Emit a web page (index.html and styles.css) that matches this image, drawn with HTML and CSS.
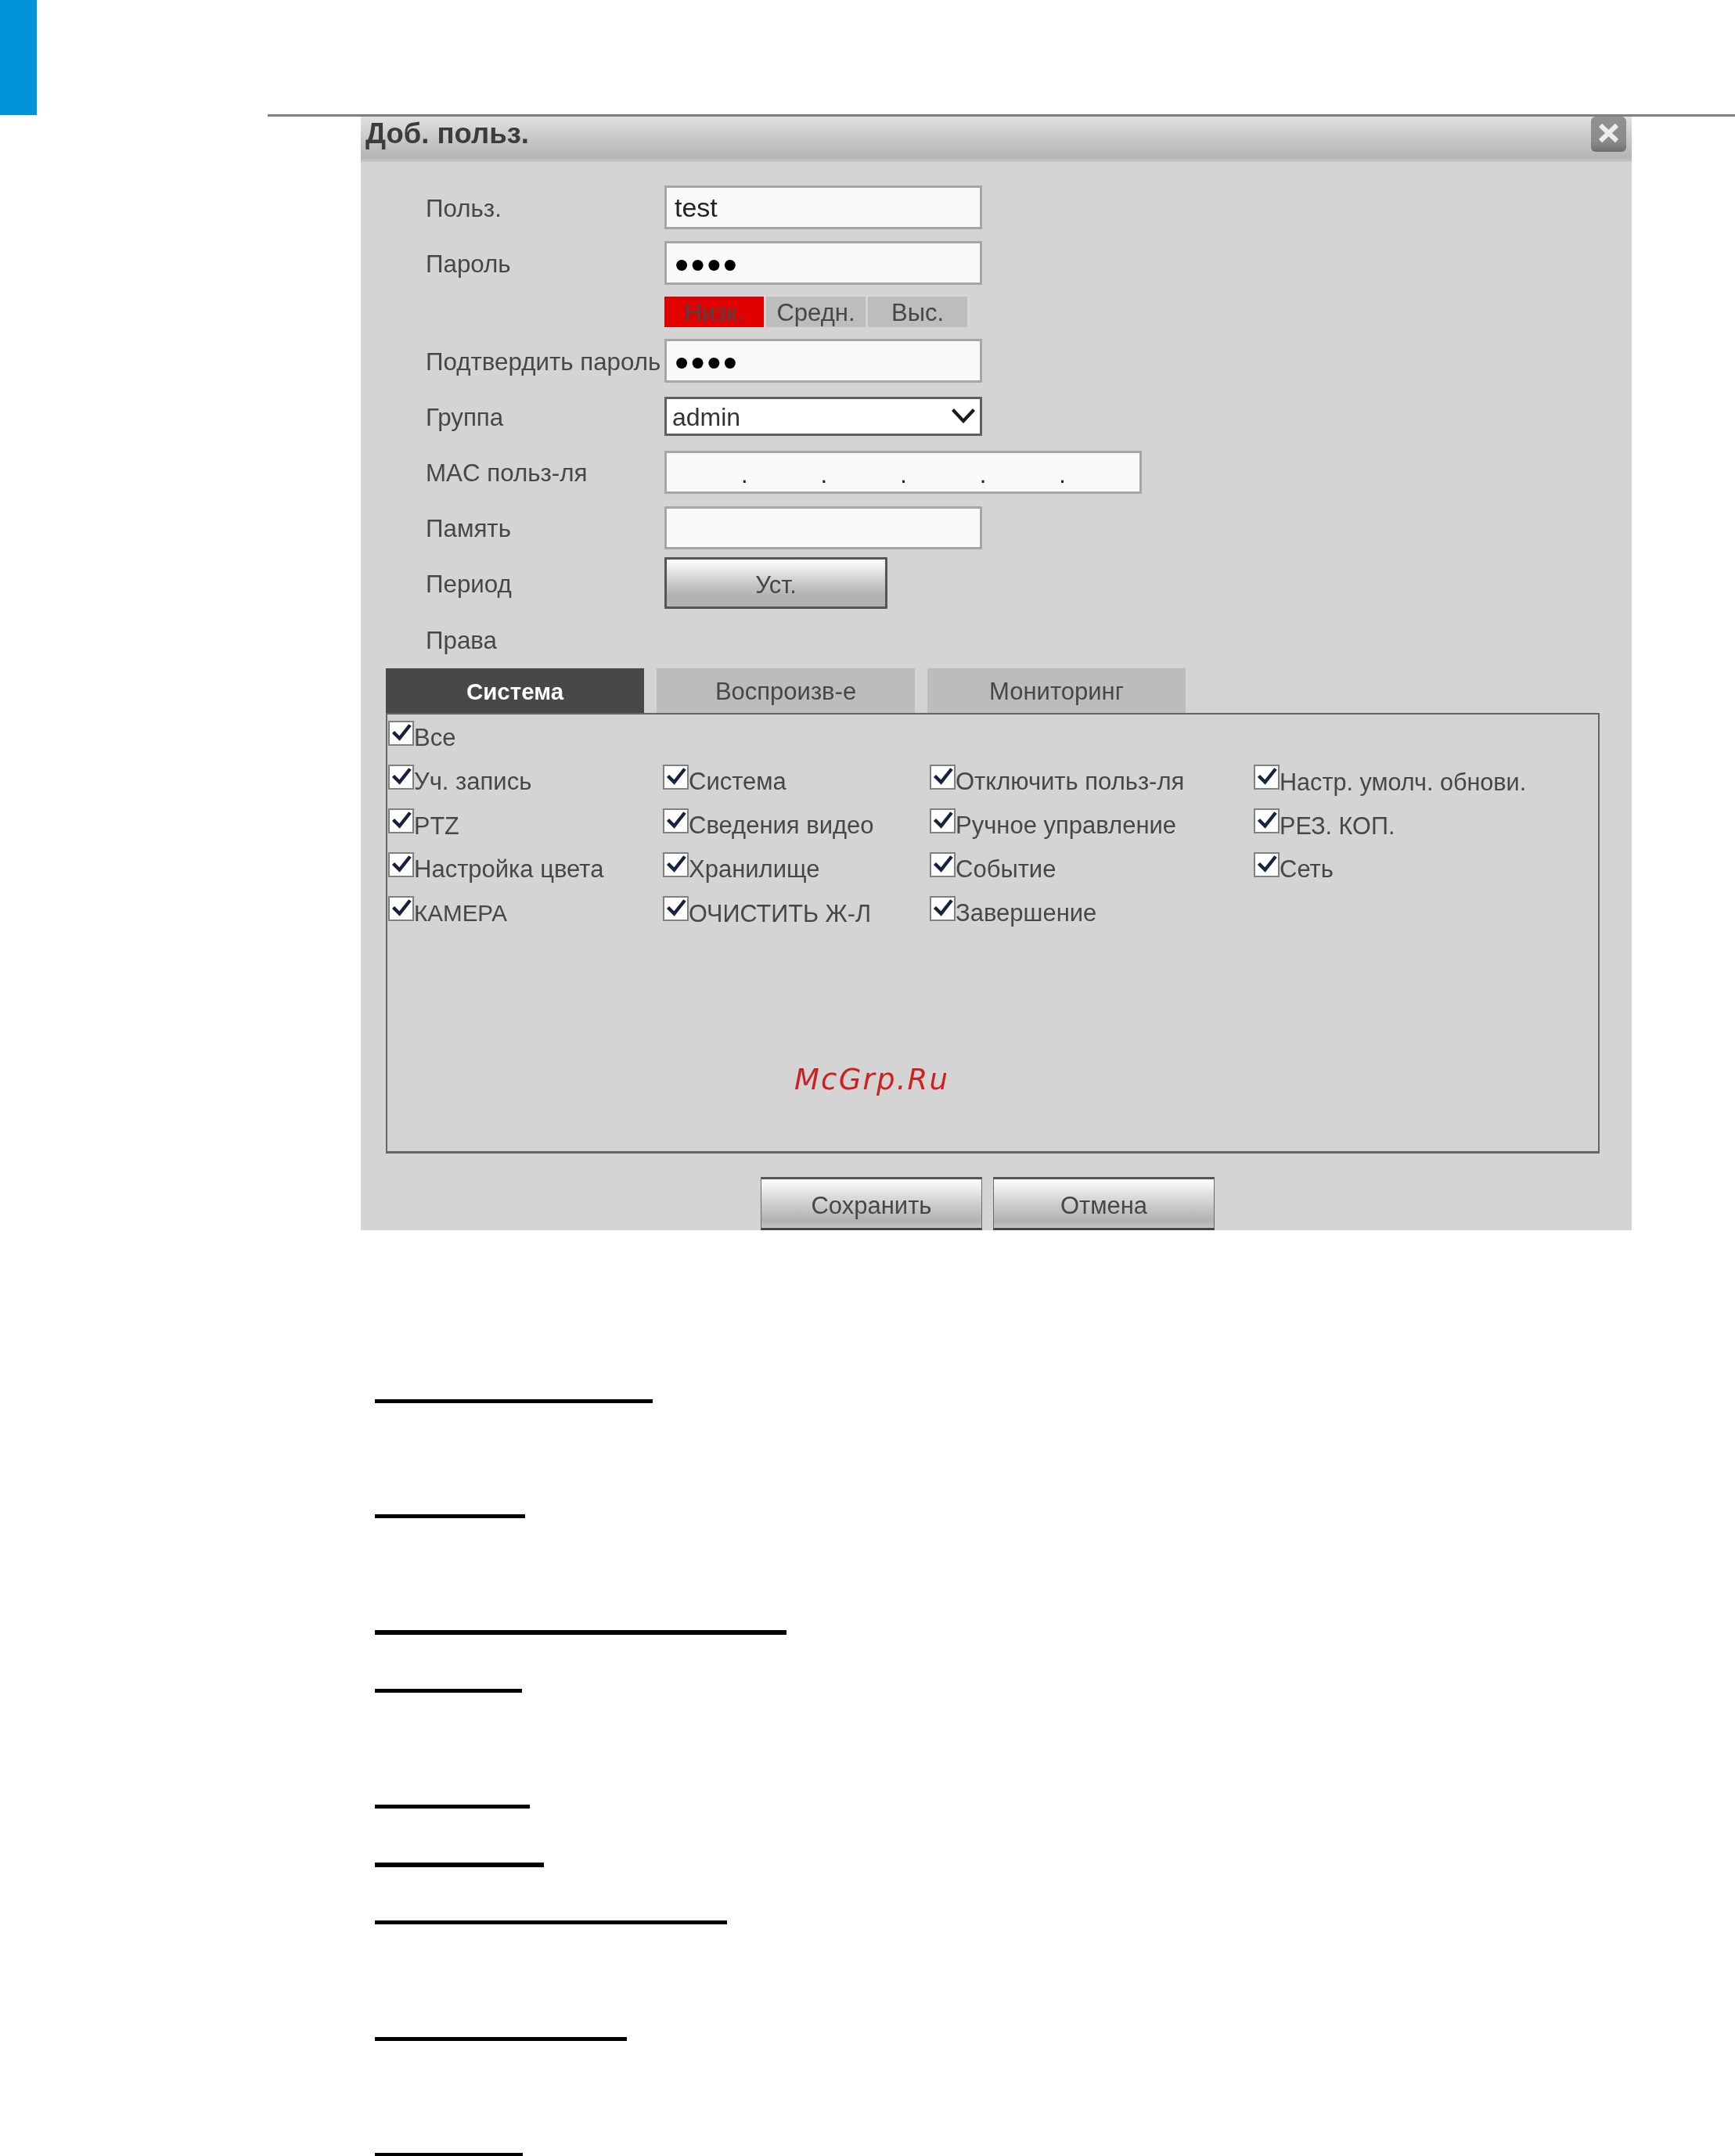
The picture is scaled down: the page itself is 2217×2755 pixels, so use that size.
FILE: index.html
```html
<!DOCTYPE html>
<html lang="ru">
<head>
<meta charset="utf-8">
<title>Доб. польз.</title>
<link rel="stylesheet" href="styles.css">
</head>
<body>
<svg class="defs" width="0" height="0" aria-hidden="true">
  <symbol id="chk" viewBox="0 0 32 32"><path d="M6.5 14.5 L14.5 22.5 L28 5.5" fill="none" stroke="#16233c" stroke-width="4.4"/></symbol>
</svg>
<header class="page-head">
  <div class="tab-mark"></div>
  <div class="rule"></div>
</header>
<section class="dialog">
  <div class="title-bar">
    <h1 class="title">Доб. польз.</h1>
    <button class="close" aria-label="Закрыть">
      <svg viewBox="0 0 45 45" width="45" height="45"><path d="M12 11 L33 31 M33 11 L12 31" stroke="#ececec" stroke-width="6" fill="none"/></svg>
    </button>
  </div>
  <form class="form">
    <div class="row r-gap15"><label class="lbl">Польз.</label><input class="field" type="text" value="test"></div>
    <div class="row r-gap15"><label class="lbl">Пароль</label><input class="field pass" type="password" value="test"></div>
    <div class="row row-strength r-gap15"><span class="lbl"></span>
      <div class="strength"><span class="lv lv-on">Низк.</span><span class="lv">Средн.</span><span class="lv">Выс.</span></div>
    </div>
    <div class="row r-gap18"><label class="lbl">Подтвердить пароль</label><input class="field pass" type="password" value="test"></div>
    <div class="row row-select r-gap19"><label class="lbl">Группа</label>
      <div class="select-wrap">
        <select class="select"><option>admin</option></select>
        <svg class="chev" viewBox="0 0 30 19" width="30" height="19"><path d="M1.5 1.5 L15 16 L28.5 1.5" fill="none" stroke="#1a1a1a" stroke-width="4.2"/></svg>
      </div>
    </div>
    <div class="row row-short r-gap16"><label class="lbl">MAC польз-ля</label>
      <div class="mac"><span>.</span><span>.</span><span>.</span><span>.</span><span>.</span></div>
    </div>
    <div class="row row-short r-gap10"><label class="lbl">Память</label><input class="field" type="text"></div>
    <div class="row row-btn r-gap19"><label class="lbl">Период</label><button type="button" class="btn-set">Уст.</button></div>
    <div class="row row-perm"><span class="lbl">Права</span></div>
  </form>
  <div class="tabs">
    <div class="tab tab-on">Система</div>
    <div class="tab">Воспроизв-е</div>
    <div class="tab">Мониторинг</div>
  </div>
  <div class="panel">
    <label class="chk chk-all"><span class="box"><svg><use href="#chk"/></svg></span><span class="cap">Все</span></label>
    <div class="grid">
      <label class="chk"><span class="box"><svg><use href="#chk"/></svg></span><span class="cap">Уч. запись</span></label>
      <label class="chk"><span class="box"><svg><use href="#chk"/></svg></span><span class="cap">Система</span></label>
      <label class="chk"><span class="box"><svg><use href="#chk"/></svg></span><span class="cap">Отключить польз-ля</span></label>
      <label class="chk"><span class="box"><svg><use href="#chk"/></svg></span><span class="cap cap-tight">Настр. умолч. обнови.</span></label>
      <label class="chk"><span class="box"><svg><use href="#chk"/></svg></span><span class="cap cap-tight">PTZ</span></label>
      <label class="chk"><span class="box"><svg><use href="#chk"/></svg></span><span class="cap">Сведения видео</span></label>
      <label class="chk"><span class="box"><svg><use href="#chk"/></svg></span><span class="cap">Ручное управление</span></label>
      <label class="chk"><span class="box"><svg><use href="#chk"/></svg></span><span class="cap cap-tight">РЕЗ. КОП.</span></label>
      <label class="chk"><span class="box"><svg><use href="#chk"/></svg></span><span class="cap">Настройка цвета</span></label>
      <label class="chk"><span class="box"><svg><use href="#chk"/></svg></span><span class="cap">Хранилище</span></label>
      <label class="chk"><span class="box"><svg><use href="#chk"/></svg></span><span class="cap">Событие</span></label>
      <label class="chk"><span class="box"><svg><use href="#chk"/></svg></span><span class="cap">Сеть</span></label>
      <label class="chk"><span class="box"><svg><use href="#chk"/></svg></span><span class="cap cap-caps">КАМЕРА</span></label>
      <label class="chk"><span class="box"><svg><use href="#chk"/></svg></span><span class="cap cap-tight">ОЧИСТИТЬ Ж-Л</span></label>
      <label class="chk"><span class="box"><svg><use href="#chk"/></svg></span><span class="cap">Завершение</span></label>
    </div>
    <div class="watermark">McGrp.Ru</div>
  </div>
  <div class="actions">
    <button type="button" class="btn-act">Сохранить</button>
    <button type="button" class="btn-act">Отмена</button>
  </div>
</section>
<div class="links">
  <span class="ul ul-1"></span>
  <span class="ul ul-2"></span>
  <span class="ul ul-3"></span>
  <span class="ul ul-4"></span>
  <span class="ul ul-5"></span>
  <span class="ul ul-6"></span>
  <span class="ul ul-7"></span>
  <span class="ul ul-8"></span>
  <span class="ul ul-9"></span>
</div>
</body>
</html>
```
FILE: styles.css
```css
* { box-sizing: border-box; }
html, body { margin: 0; padding: 0; }
body {
  width: 2217px;
  height: 2755px;
  overflow: hidden;
  background: #fff;
  font-family: "Liberation Sans", Arial, sans-serif;
  font-size: 31px;
  color: #474747;
}
.defs { display: block; height: 0; }

/* page head */
.page-head { height: 149px; display: flex; flex-direction: column; }
.tab-mark { width: 47px; height: 147px; margin-bottom: -1px; background: #0094d9; }
.rule { margin-left: 342px; height: 3px; background: #808080; }

/* dialog */
.dialog {
  margin-left: 461px;
  width: 1624px;
  height: 1423px;
  background: #d4d4d4;
  overflow: hidden;
  filter: blur(0.5px);
}
.title-bar {
  height: 58px;
  display: flex;
  justify-content: space-between;
  align-items: flex-start;
  padding: 0 7px 0 6px;
  background: linear-gradient(#e1e1e1 0, #cfcfcf 35%, #b6b4b4 90%, #c6c6c6 100%);
}
.title {
  margin: 0;
  font-size: 36.5px;
  line-height: 44px;
  font-weight: 700;
  color: #3c3c3c;
}
.close {
  width: 45px;
  height: 45px;
  padding: 0;
  border: 0;
  border-radius: 6px;
  background: linear-gradient(#919191 0, #8b8b8b 70%, #6e6e6e 100%);
}
.close svg { display: block; }

/* form */
.form { padding: 30px 0 0 83px; }
.row { display: flex; align-items: center; height: 56px; }
.row-strength { height: 39px; }
.row-select { height: 50px; }
.row-short { height: 55px; }
.row-btn { height: 66px; }
.row-perm { height: 40px; }
.r-gap10 { margin-bottom: 10px; }
.r-gap15 { margin-bottom: 15px; }
.r-gap16 { margin-bottom: 16px; }
.r-gap18 { margin-bottom: 18px; }
.r-gap19 { margin-bottom: 19px; }
.lbl { flex: 0 0 305px; white-space: nowrap; font-size: 31.3px; padding-top: 3px; }

.field {
  width: 406px;
  height: 100%;
  padding: 0 10px;
  border: 3px solid #a6a6a6;
  background: #fafafa;
  font: 34px "Liberation Sans", Arial, sans-serif;
  color: #222;
  outline: none;
}
.pass { font-size: 52px; letter-spacing: 2.4px; color: #000; padding: 3px 0 0 10px; }

.strength { display: flex; gap: 3px; height: 100%; }
.lv {
  width: 127px;
  display: flex;
  align-items: center;
  justify-content: center;
  padding-top: 2px;
  background: #bdbdbd;
}
.lv-on { background: #e00000; }

.select-wrap { position: relative; width: 406px; height: 100%; }
.select {
  display: block;
  width: 100%;
  height: 100%;
  padding: 2px 0 0 7px;
  appearance: none;
  border: 3px solid #5e5e5e;
  border-radius: 0;
  background: #fff;
  font: 32px "Liberation Sans", Arial, sans-serif;
  color: #333;
}
.chev { position: absolute; right: 9px; top: 15px; pointer-events: none; }

.mac {
  display: flex;
  align-items: center;
  width: 610px;
  height: 100%;
  padding: 6px 0 0 2px;
  border: 3px solid #a6a6a6;
  background: #fafafa;
}
.mac span { width: 101.6px; text-align: right; color: #222; }

.btn-set {
  width: 285px;
  height: 100%;
  padding: 6px 0 0;
  border: 3px solid #555;
  border-radius: 1px;
  background: linear-gradient(#fff 0, #d9d9d9 35%, #b2b0b0 78%, #b4b4b4 100%);
  font: 31px "Liberation Sans", Arial, sans-serif;
  color: #474747;
}

/* tabs */
.tabs { display: flex; gap: 16px; padding-left: 32px; margin-top: 17px; }
.tab {
  width: 330px;
  height: 57px;
  display: flex;
  align-items: center;
  justify-content: center;
  padding-top: 3px;
  background: #bcbcbc;
}
.tab-on { background: #484848; color: #fff; font-weight: 700; font-size: 29.5px; }

.panel {
  position: relative;
  margin-left: 32px;
  width: 1551px;
  height: 563px;
  padding: 8px 0 0 1px;
  border: solid #666;
  border-width: 2px 2px 3px;
}
.grid {
  display: grid;
  grid-template-columns: 351px 341px 414px 1fr;
  grid-auto-rows: 56px;
}
.chk-all { height: 56px; }
.chk { display: flex; align-items: flex-start; }
.box {
  flex: none;
  width: 33px;
  height: 32px;
  background: #fff;
  border: 2.5px solid #808080;
  position: relative;
}
.box svg { position: absolute; left: -2.5px; top: -2.5px; width: 32px; height: 32px; display: block; }
.cap { margin-top: 6px; line-height: 32px; white-space: nowrap; font-size: 31px; }
.cap-tight { font-size: 30.6px; }
.cap-caps { font-size: 29.6px; }

.watermark {
  position: absolute;
  left: 520px;
  top: 445px;
  font-family: "DejaVu Sans", sans-serif;
  font-style: italic;
  font-size: 37px;
  letter-spacing: 2.2px;
  color: #cf2020;
}

/* actions */
.actions { display: flex; gap: 14px; padding-left: 511px; margin-top: 30px; }
.btn-act {
  width: 283px;
  height: 68px;
  padding: 5px 0 0;
  border: solid #6a6a6a;
  border-width: 3px 1px 3px;
  border-top-color: #555;
  border-bottom-color: #444;
  background: linear-gradient(#fff 0, #dcdcdc 35%, #b2b0b0 85%, #c4c4c4 100%);
  font: 31px "Liberation Sans", Arial, sans-serif;
  color: #474747;
}

/* underlines */
.links {
  display: flex;
  flex-direction: column;
  align-items: flex-start;
  margin-left: 479px;
  padding-top: 216px;
}
.ul { display: block; height: 5px; background: #000; }
.ul-1 { width: 355px; }
.ul-2 { width: 192px; margin-top: 142px; }
.ul-3 { width: 526px; margin-top: 143px; height: 6px; }
.ul-4 { width: 188px; margin-top: 69px; }
.ul-5 { width: 198px; margin-top: 143px; }
.ul-6 { width: 216px; margin-top: 69px; height: 6px; }
.ul-7 { width: 450px; margin-top: 68px; }
.ul-8 { width: 322px; margin-top: 144px; }
.ul-9 { width: 189px; margin-top: 143px; }
```
